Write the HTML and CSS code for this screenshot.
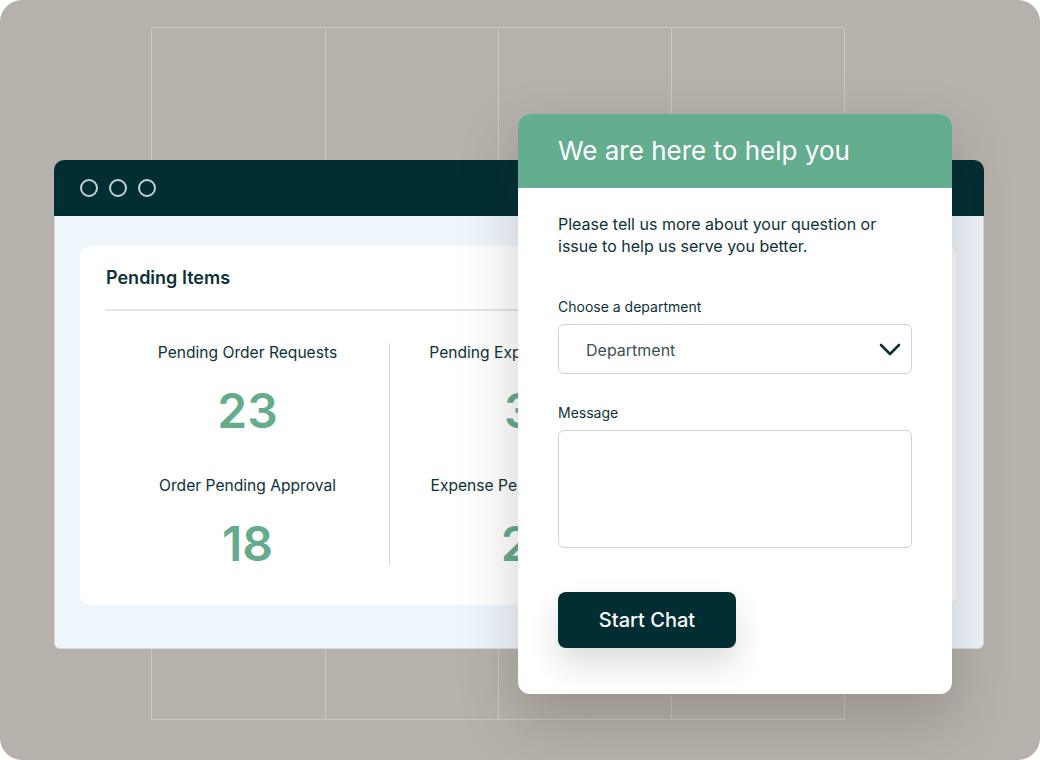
FILE: index.html
```html
<!DOCTYPE html>
<html lang="en">
<head>
    <meta charset="UTF-8">
    <title>Help Chat</title>
    <link rel="stylesheet" href="styles.css">
</head>
<body>

<div class="stage">
    <div class="grid-lines">
        <div class="grid-col"></div>
        <div class="grid-col"></div>
        <div class="grid-col"></div>
        <div class="grid-col"></div>
    </div>

    <div class="app-window">
        <div class="window-bar">
            <span class="dot"></span>
            <span class="dot"></span>
            <span class="dot"></span>
        </div>
        <div class="window-body">
            <div class="card">
                <h2 class="card-title">Pending Items</h2>
                <div class="stats">
                    <div class="stat-col">
                        <div class="stat-label">Pending Order Requests</div>
                        <div class="stat-value">23</div>
                        <div class="stat-label">Order Pending Approval</div>
                        <div class="stat-value">18</div>
                    </div>
                    <div class="stat-col">
                        <div class="stat-label">Pending Expense Requests</div>
                        <div class="stat-value">31</div>
                        <div class="stat-label">Expense Pending Approval</div>
                        <div class="stat-value">27</div>
                    </div>
                    <div class="stat-col">
                        <div class="stat-label">Pending Invoices</div>
                        <div class="stat-value">12</div>
                        <div class="stat-label">Invoices Pending Approval</div>
                        <div class="stat-value">9</div>
                    </div>
                </div>
            </div>
        </div>
    </div>

    <div class="chat-popup">
        <div class="chat-header">We are here to help you</div>
        <form class="chat-body">
            <p class="chat-intro">Please tell us more about your question or issue to help us serve you better.</p>

            <label class="field-label" for="department">Choose a department</label>
            <div class="select-box" id="department">
                <span>Department</span>
                <svg class="chevron" width="22" height="13" viewBox="0 0 22 13">
                    <path d="M2 2 L11 11 L20 2" fill="none" stroke="#0d3236" stroke-width="2.6" stroke-linecap="round" stroke-linejoin="round"/>
                </svg>
            </div>

            <label class="field-label" for="message">Message</label>
            <textarea id="message" class="message-box"></textarea>

            <button type="button" class="start-btn">Start Chat</button>
        </form>
    </div>
</div>

</body>
</html>
```

FILE: styles.css
```css
body, html {
    margin: 0;
    padding: 0;
    background-color: #ffffff;
    font-family: Inter, "Noto Sans", sans-serif;
    color: #0d3236;
}

.stage {
    position: relative;
    width: 1040px;
    height: 760px;
    background-color: #b6b1aa;
    border-radius: 22px;
    overflow: hidden;
}

/* decorative background grid */
.grid-lines {
    position: absolute;
    left: 151px;
    top: 27px;
    width: 694px;
    height: 693px;
    display: grid;
    grid-template-columns: repeat(4, 1fr);
    border: 1px solid #cbc6bf;
    box-sizing: border-box;
}

.grid-col {
    border-left: 1px solid #cbc6bf;
}

.grid-col:first-child {
    border-left: none;
}

.app-window {
    position: absolute;
    left: 54px;
    top: 160px;
    width: 930px;
}

.window-bar {
    height: 56px;
    background-color: #002e33;
    border-radius: 10px 10px 0 0;
    display: flex;
    align-items: center;
    gap: 11px;
    padding-left: 26px;
}

.dot {
    width: 14px;
    height: 14px;
    border: 2px solid #c3d0d0;
    border-radius: 50%;
}

.window-body {
    background-color: #eef6fc;
    border: 1px solid #d3dde2;
    border-top: none;
    border-radius: 0 0 6px 6px;
    padding: 30px 0 43px 25px;
}

.card {
    width: 850px;
    background-color: #ffffff;
    border-radius: 10px;
    padding: 20px 0 39px 26px;
}

.card-title {
    margin: 0;
    font-size: 18px;
    line-height: 24px;
    font-weight: 600;
}

.stats {
    margin-top: 19px;
    border-top: 2px solid #e3e7e7;
    display: grid;
    grid-template-columns: 283px 280px 1fr;
    width: 824px;
}

.stat-col {
    margin-top: 32px;
    text-align: center;
    border-left: 1px solid #d4dcdc;
}

.stat-col:first-child {
    border-left: none;
}

.stat-label {
    font-size: 15.6px;
    line-height: 20px;
    margin-top: 43px;
}

.stat-label:first-child {
    margin-top: 0;
}

.stat-value {
    font-size: 48px;
    line-height: 44px;
    font-weight: 600;
    color: #64ac8c;
    margin-top: 26px;
}

/* chat popup floating over the window */
.chat-popup {
    position: absolute;
    left: 518px;
    top: 114px;
    width: 434px;
    background-color: #ffffff;
    border-radius: 12px;
    box-shadow: 0 24px 60px rgba(40, 35, 30, 0.22);
    overflow: hidden;
}

.chat-header {
    height: 74px;
    background-color: #65ad8f;
    color: #ffffff;
    font-size: 26px;
    line-height: 74px;
    padding-left: 40px;
    box-sizing: border-box;
}

.chat-body {
    padding: 25px 40px 46px 40px;
    display: flex;
    flex-direction: column;
    align-items: flex-start;
}

.chat-intro {
    margin: 0;
    font-size: 16px;
    line-height: 22px;
    width: 340px;
}

.field-label {
    font-size: 14px;
    line-height: 20px;
    margin-top: 40px;
}

.select-box + .field-label {
    margin-top: 29px;
}

.select-box {
    margin-top: 7px;
    width: 354px;
    height: 50px;
    box-sizing: border-box;
    border: 1px solid #c9d4d5;
    border-radius: 6px;
    display: flex;
    align-items: center;
    justify-content: space-between;
    padding: 1px 10px 0 27px;
    font-size: 16px;
    color: #3d5052;
}

.chevron {
    display: block;
}

.message-box {
    margin-top: 7px;
    width: 354px;
    height: 118px;
    box-sizing: border-box;
    border: 1px solid #c9d4d5;
    border-radius: 6px;
    resize: none;
    font-family: inherit;
}

.start-btn {
    margin-top: 44px;
    width: 178px;
    height: 56px;
    background-color: #002e33;
    color: #ffffff;
    border: none;
    border-radius: 8px;
    font-family: Inter, "Noto Sans", sans-serif;
    font-size: 20px;
    font-weight: 500;
    box-shadow: 0 16px 32px rgba(0, 0, 0, 0.14);
}
```
